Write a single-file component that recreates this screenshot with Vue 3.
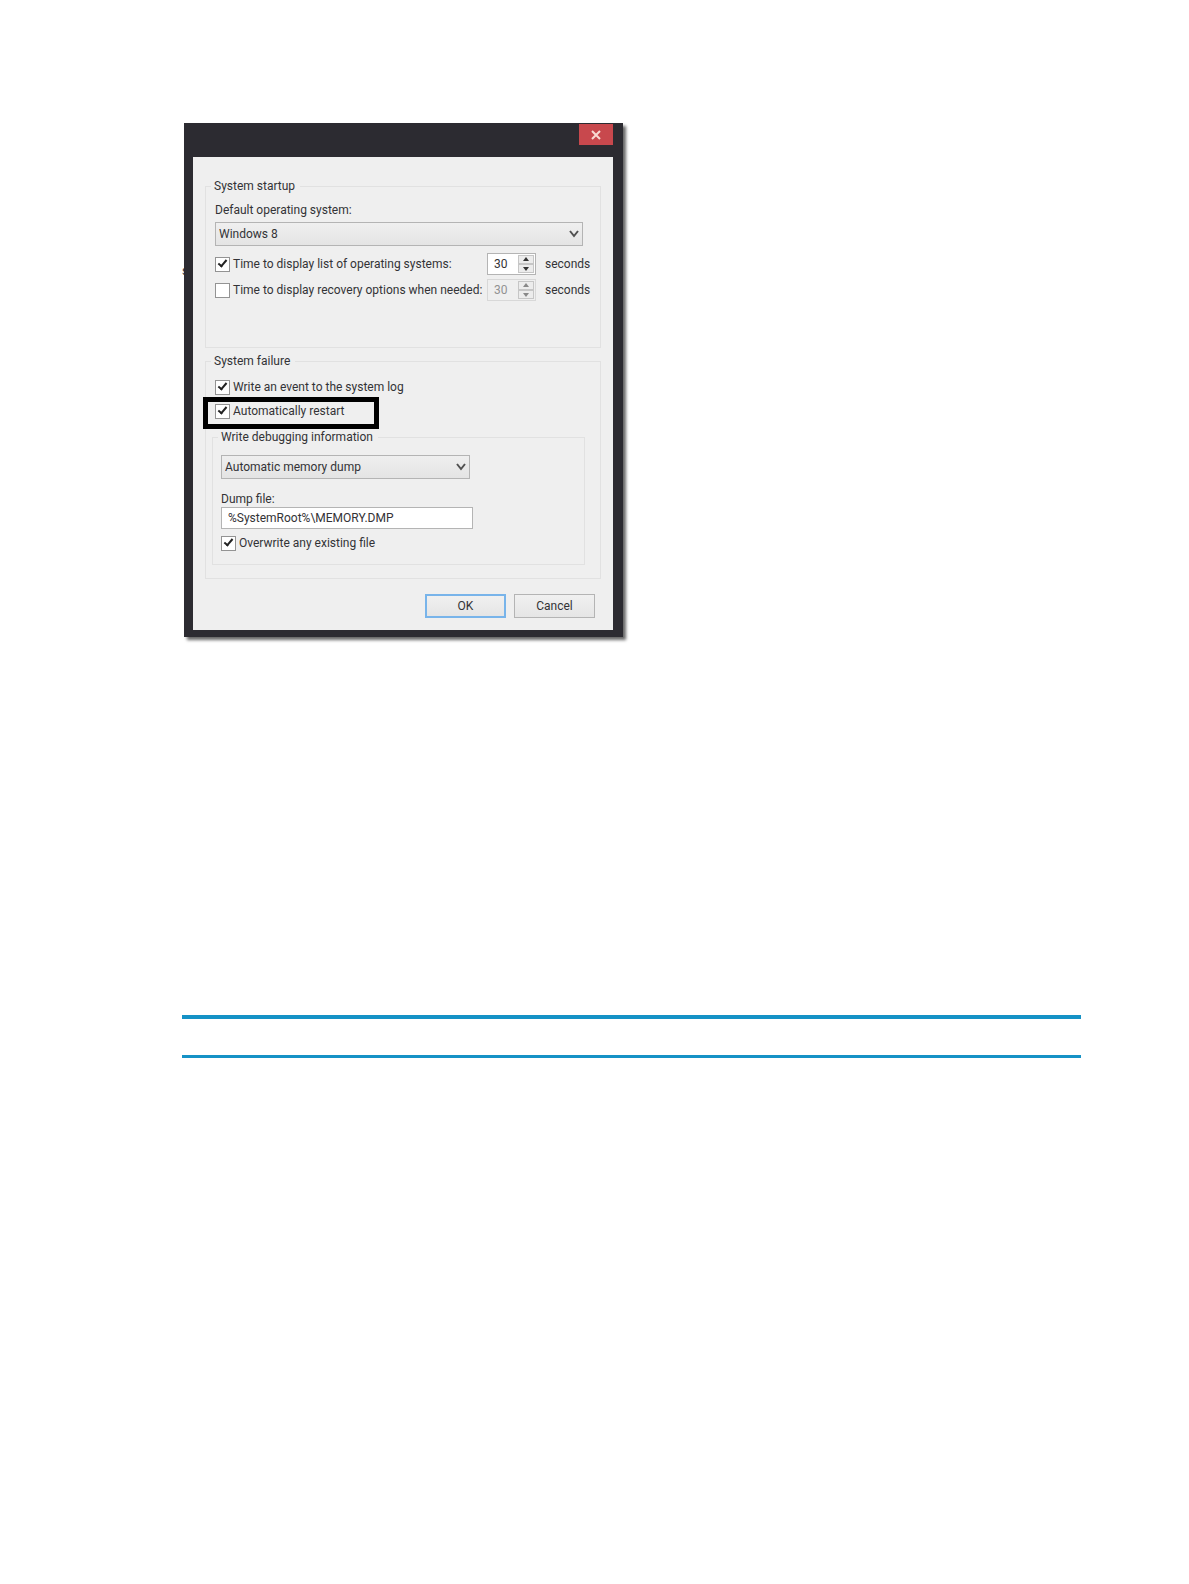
<script setup>
import { ref } from 'vue'

// --- State ---
const defaultOs = ref('Windows 8')
const showList = ref(true)
const listSeconds = ref(30)
const showRecovery = ref(false)
const recoverySeconds = ref(30)
const writeEvent = ref(true)
const autoRestart = ref(true)
const dumpType = ref('Automatic memory dump')
const dumpFile = ref('%SystemRoot%\\MEMORY.DMP')
const overwrite = ref(true)
</script>

<template>
  <main class="page">
    <div class="figure">
      <span class="stray">s</span>
      <section class="dialog" role="dialog">
        <header class="titlebar">
          <button class="close" type="button" aria-label="Close">
            <svg viewBox="0 0 10 10" width="10" height="10">
              <path d="M1 1 L9 9 M9 1 L1 9" />
            </svg>
          </button>
        </header>

        <form class="panel" @submit.prevent>
          <!-- System startup -->
          <fieldset class="group startup">
            <legend>System startup</legend>
            <label class="caption" for="os">Default operating system:</label>
            <div class="select">
              <select id="os" v-model="defaultOs">
                <option>Windows 8</option>
              </select>
              <svg viewBox="0 0 10 8" width="10" height="8">
                <path d="M1 1 L5 6 L9 1" />
              </svg>
            </div>
            <div class="time-row first">
              <label class="check">
                <input v-model="showList" type="checkbox" />
                <span>Time to display list of operating systems:</span>
              </label>
              <div class="spinner">
                <input v-model="listSeconds" type="text" aria-label="seconds" />
                <div class="steps">
                  <button type="button" aria-label="More" @click="listSeconds++">
                    <svg viewBox="0 0 8 5" width="8" height="5"><path d="M4 0 L7 4 H1 Z" /></svg>
                  </button>
                  <button type="button" aria-label="Less" @click="listSeconds--">
                    <svg viewBox="0 0 8 5" width="8" height="5"><path d="M1 1 H7 L4 5 Z" /></svg>
                  </button>
                </div>
              </div>
              <span class="unit">seconds</span>
            </div>
            <div class="time-row">
              <label class="check">
                <input v-model="showRecovery" type="checkbox" />
                <span>Time to display recovery options when needed:</span>
              </label>
              <div class="spinner" :class="{ off: !showRecovery }">
                <input v-model="recoverySeconds" type="text" aria-label="seconds" :disabled="!showRecovery" />
                <div class="steps">
                  <button type="button" aria-label="More" :disabled="!showRecovery" @click="recoverySeconds++">
                    <svg viewBox="0 0 8 5" width="8" height="5"><path d="M4 0 L7 4 H1 Z" /></svg>
                  </button>
                  <button type="button" aria-label="Less" :disabled="!showRecovery" @click="recoverySeconds--">
                    <svg viewBox="0 0 8 5" width="8" height="5"><path d="M1 1 H7 L4 5 Z" /></svg>
                  </button>
                </div>
              </div>
              <span class="unit">seconds</span>
            </div>
          </fieldset>

          <!-- System failure -->
          <fieldset class="group failure">
            <legend>System failure</legend>
            <label class="check">
              <input v-model="writeEvent" type="checkbox" />
              <span>Write an event to the system log</span>
            </label>
            <label class="check marked">
              <input v-model="autoRestart" type="checkbox" />
              <span>Automatically restart</span>
            </label>

            <fieldset class="group debug">
              <legend>Write debugging information</legend>
              <div class="select short">
                <select v-model="dumpType" aria-label="Write debugging information">
                  <option>Automatic memory dump</option>
                </select>
                <svg viewBox="0 0 10 8" width="10" height="8">
                  <path d="M1 1 L5 6 L9 1" />
                </svg>
              </div>
              <label class="caption dump" for="dump">Dump file:</label>
              <input id="dump" v-model="dumpFile" class="text" type="text" />
              <label class="check">
                <input v-model="overwrite" type="checkbox" />
                <span>Overwrite any existing file</span>
              </label>
            </fieldset>
          </fieldset>

          <div class="actions">
            <button class="btn primary" type="submit">OK</button>
            <button class="btn" type="button">Cancel</button>
          </div>
        </form>
      </section>
    </div>

    <hr class="rule thick" />
    <hr class="rule" />
  </main>
</template>

<style>
body {
  margin: 0;
  background: #fff;
}
</style>

<style scoped>
.page {
  --ink: #333336;
  --frame: #2c2b31;
  --panel: #efefef;
  --line: #e1e1e1;
  --control: #b4b4b4;
  --blue: #1592c6;

  box-sizing: border-box;
  min-height: 100vh;
  padding: 123px 108px 0 182px;
  font-family: Roboto, 'Liberation Sans', sans-serif;
  font-size: 12px;
  line-height: 16px;
  color: var(--ink);
}

.page *,
.page *::after {
  box-sizing: border-box;
}

input,
select,
button {
  margin: 0;
  font: inherit;
  color: inherit;
}

/* --- Dialog --- */
.figure {
  position: relative;
  padding-left: 2px;
}

.stray {
  position: absolute;
  left: 0;
  top: 140px;
}

.dialog {
  position: relative;
  max-width: 439px;
  padding: 0 10px 7px 9px;
  background: var(--frame);
  box-shadow: 3px 3px 3px rgba(0, 0, 0, 0.6);
}

.titlebar {
  display: flex;
  justify-content: flex-end;
  align-items: flex-start;
  height: 34px;
  padding-top: 1px;
}

.close {
  display: flex;
  align-items: center;
  justify-content: center;
  width: 34px;
  height: 21px;
  padding: 0;
  border: 0;
  background: #c8484d;
}

.close path {
  fill: none;
  stroke: #f8d9d2;
  stroke-width: 2;
}

.panel {
  padding: 21px 12px 12px;
  background: var(--panel);
}

/* --- Groups --- */
.group {
  min-width: 0;
  margin: 0;
  border: 1px solid var(--line);
}

.group legend {
  padding: 0 5px 0 3px;
}

.startup {
  padding: 8px 17px 46px 9px;
}

.startup legend,
.failure > legend {
  margin-left: -4px;
}

.failure {
  margin-top: 5px;
  padding: 6px 15px 13px 9px;
}

.debug {
  margin: 6px 0 0 -3px;
  padding: 10px 8px 9px;
}

.debug legend {
  margin-left: -3px;
}

.caption {
  display: block;
}

.dump {
  margin-top: 12px;
}

/* --- Controls --- */
.select {
  position: relative;
  margin-top: 4px;
}

.select.short {
  max-width: 249px;
  margin-top: 0;
}

.select select {
  display: block;
  width: 100%;
  height: 24px;
  padding: 0 24px 0 3px;
  border: 1px solid var(--control);
  border-radius: 0;
  background: linear-gradient(#efefef, #e4e4e4);
  appearance: none;
}

.select svg {
  position: absolute;
  right: 4px;
  top: 8px;
  pointer-events: none;
}

.select path {
  fill: none;
  stroke: #505050;
  stroke-width: 2;
}

.check {
  display: flex;
  align-items: center;
  gap: 3px;
  height: 24px;
  white-space: nowrap;
}

.check input {
  flex: none;
  width: 15px;
  height: 15px;
  border: 1px solid #939393;
  background: #fff;
  appearance: none;
}

.check input:checked::after {
  content: '';
  display: block;
  width: 5px;
  height: 9px;
  margin-left: 4px;
  border: solid #222;
  border-width: 0 2px 2px 0;
  transform: rotate(40deg);
}

.time-row {
  display: flex;
  align-items: center;
  height: 22px;
  margin-top: 4px;
}

.time-row.first {
  margin-top: 7px;
}

.time-row .check {
  flex: 0 0 272px;
  min-width: 0;
}

.spinner {
  display: flex;
  flex: none;
  width: 49px;
  height: 22px;
  padding: 1px;
  border: 1px solid var(--control);
  background: #fff;
}

.spinner input {
  width: 29px;
  padding: 0 0 0 5px;
  border: 0;
  background: transparent;
}

.steps {
  display: flex;
  flex: 1;
  flex-direction: column;
}

.steps button {
  display: flex;
  flex: 1;
  align-items: center;
  justify-content: center;
  padding: 0;
  border: 1px solid #c6c6c6;
  background: #ececec;
}

.steps path {
  fill: #333;
}

.spinner.off {
  border-color: #d8d8d8;
  background: var(--panel);
  color: #929292;
}

.spinner.off path {
  fill: #888;
}

.unit {
  margin-left: 9px;
}

/* Black frame around the restart option */
.marked {
  position: relative;
}

.marked::after {
  content: '';
  position: absolute;
  left: -12px;
  top: -2px;
  width: 176px;
  height: 32px;
  border: 5px solid #000;
}

.text {
  display: block;
  width: 100%;
  max-width: 252px;
  height: 22px;
  margin-bottom: 2px;
  padding: 0 6px;
  border: 1px solid var(--control);
  background: #fff;
}

.actions {
  display: flex;
  justify-content: flex-end;
  gap: 8px;
  margin-top: 15px;
  padding-right: 6px;
}

.btn {
  width: 81px;
  height: 24px;
  padding: 0;
  border: 1px solid var(--control);
  background: linear-gradient(#f0f0f0, #e5e5e5);
}

.btn.primary {
  border: 2px solid #78b4ea;
}

/* --- Rules --- */
.rule {
  height: 3px;
  margin: 36px 0 0;
  border: 0;
  background: var(--blue);
}

.rule.thick {
  height: 4px;
  margin-top: 378px;
}
</style>
